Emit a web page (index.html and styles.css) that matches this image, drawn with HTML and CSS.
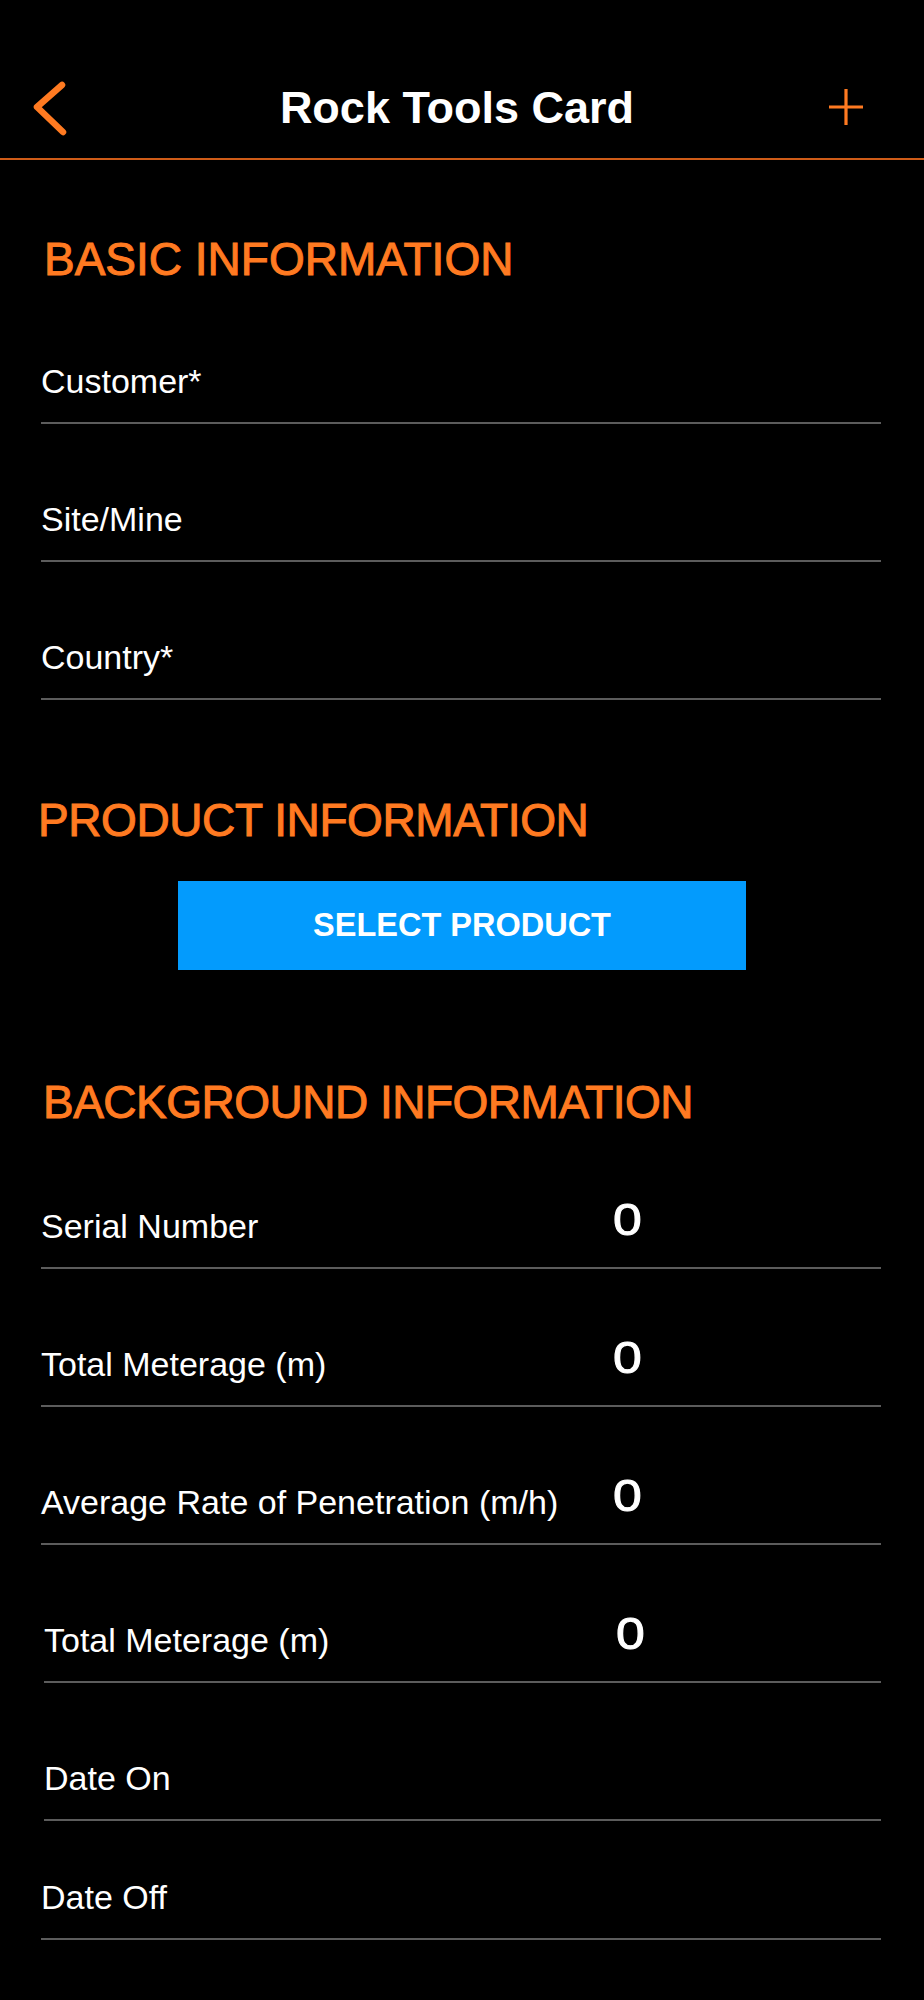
FILE: index.html
```html
<!DOCTYPE html>
<html lang="en">
<head>
<meta charset="utf-8">
<title>Rock Tools Card</title>
<link rel="stylesheet" href="styles.css">
</head>
<body>
<div class="screen">
  <header class="topbar">
    <div class="topbar-left">
      <svg class="icon-back" width="40" height="60" viewBox="0 0 40 60" aria-hidden="true">
        <path d="M31 5 L6 27 L32 52" fill="none" stroke="#ff7a21" stroke-width="6.5" stroke-linecap="round" stroke-linejoin="round"/>
      </svg>
    </div>
    <h1 class="topbar-title">Rock Tools Card</h1>
    <div class="topbar-right">
      <svg class="icon-plus" width="40" height="40" viewBox="0 0 40 40" aria-hidden="true">
        <path d="M3 20 H37 M20 2 V38" fill="none" stroke="#ff7a21" stroke-width="3.2"/>
      </svg>
    </div>
  </header>

  <main class="content">
    <h2 class="section-title section-basic">BASIC INFORMATION</h2>
    <div class="field"><span class="label">Customer*</span></div>
    <div class="field"><span class="label">Site/Mine</span></div>
    <div class="field"><span class="label">Country*</span></div>

    <h2 class="section-title section-product">PRODUCT INFORMATION</h2>
    <div class="button-row">
      <button class="select-button" type="button">SELECT PRODUCT</button>
    </div>

    <h2 class="section-title section-background">BACKGROUND INFORMATION</h2>
    <div class="field field-value"><span class="label">Serial Number</span><span class="value">0</span></div>
    <div class="field field-value"><span class="label">Total Meterage (m)</span><span class="value">0</span></div>
    <div class="field field-value"><span class="label">Average Rate of Penetration (m/h)</span><span class="value">0</span></div>
    <div class="field field-value field-shift"><span class="label">Total Meterage (m)</span><span class="value">0</span></div>
    <div class="field field-shift"><span class="label">Date On</span></div>
    <div class="field field-last"><span class="label">Date Off</span></div>
  </main>
</div>
</body>
</html>
```

FILE: styles.css
```css
* {
  box-sizing: border-box;
}

html, body {
  margin: 0;
  padding: 0;
  background: #000;
}

body {
  font-family: "Liberation Sans", Arial, Helvetica, sans-serif;
  color: #fff;
}

.screen {
  width: 924px;
  min-height: 2000px;
  background: #000;
}

/* Top bar */
.topbar {
  height: 160px;
  padding-top: 82px;
  border-bottom: 2px solid #cf5c18;
  display: flex;
  align-items: flex-start;
}

.topbar-left {
  width: 111px;
  padding-left: 31px;
}

.icon-back {
  display: block;
  margin-top: -2px;
}

.topbar-title {
  flex: 1;
  margin: 0;
  text-align: center;
  font-size: 45px;
  line-height: 52px;
  font-weight: 700;
  color: #fff;
}

.topbar-right {
  width: 121px;
  padding-left: 23px;
}

.icon-plus {
  display: block;
  margin-top: 5px;
}

/* Content */
.content {
  margin-left: 41px;
  width: 840px;
}

.section-title {
  margin: 0;
  font-size: 46px;
  line-height: 54px;
  font-weight: 400;
  color: #ff7a21;
  white-space: nowrap;
  -webkit-text-stroke: 1px #ff7a21;
}

.section-basic {
  margin-top: 72px;
  padding-left: 3px;
}

.section-product {
  margin-top: 93px;
  margin-left: -3px;
  letter-spacing: -0.4px;
}

.section-background {
  margin-top: 105px;
  margin-bottom: 2px;
  padding-left: 2px;
  letter-spacing: -0.5px;
}

.field {
  height: 138px;
  border-bottom: 2px solid #5c5c5c;
  padding-bottom: 21px;
  display: flex;
  align-items: flex-end;
}

.field-shift {
  margin-left: 3px;
}

.field-last {
  height: 119px;
  margin-left: 0;
}

.label {
  font-size: 34px;
  line-height: 40px;
  color: #fff;
  white-space: nowrap;
}

.field-value .label {
  width: 572px;
  flex: none;
}

.value {
  display: inline-block;
  font-size: 45px;
  line-height: 50px;
  font-weight: 400;
  color: #fff;
  -webkit-text-stroke: 1px #fff;
  margin-bottom: 1px;
  transform: scaleX(1.15);
  transform-origin: left bottom;
}

/* Button */
.button-row {
  display: flex;
  justify-content: center;
  margin-top: 34px;
  margin-left: -41px;
  width: 924px;
}

.select-button {
  width: 568px;
  height: 89px;
  border: none;
  border-radius: 0;
  background: #039bfd;
  color: #fff;
  font-family: "Liberation Sans", Arial, Helvetica, sans-serif;
  font-size: 32.5px;
  font-weight: 700;
  padding: 0;
}
```
